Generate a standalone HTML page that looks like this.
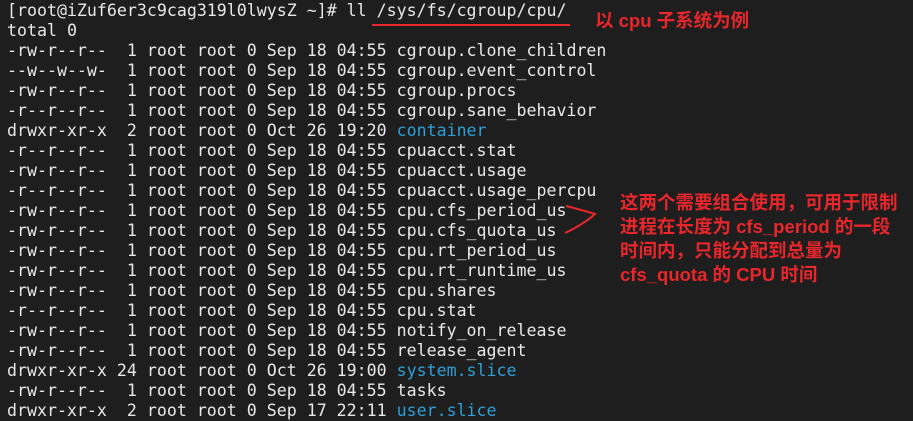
<!DOCTYPE html>
<html><head><meta charset="utf-8"><style>
html,body{margin:0;padding:0;background:#1e1e1e;width:913px;height:421px;overflow:hidden}
pre{margin:0;position:absolute;left:7px;top:1px;font-family:"DejaVu Sans Mono","Liberation Mono",monospace;font-size:16.6px;line-height:20px;color:#e8e8e8}
.b{color:#2e9fd8}
.r{position:absolute;color:#e8262b;font-family:"Liberation Sans","Noto Sans CJK SC",sans-serif;font-weight:bold;font-size:18.5px;white-space:nowrap}
</style></head><body>
<pre>[root@iZuf6er3c9cag319l0lwysZ ~]# ll /sys/fs/cgroup/cpu/
total 0
-rw-r--r--  1 root root 0 Sep 18 04:55 cgroup.clone_children
--w--w--w-  1 root root 0 Sep 18 04:55 cgroup.event_control
-rw-r--r--  1 root root 0 Sep 18 04:55 cgroup.procs
-r--r--r--  1 root root 0 Sep 18 04:55 cgroup.sane_behavior
drwxr-xr-x  2 root root 0 Oct 26 19:20 <span class="b">container</span>
-r--r--r--  1 root root 0 Sep 18 04:55 cpuacct.stat
-rw-r--r--  1 root root 0 Sep 18 04:55 cpuacct.usage
-r--r--r--  1 root root 0 Sep 18 04:55 cpuacct.usage_percpu
-rw-r--r--  1 root root 0 Sep 18 04:55 cpu.cfs_period_us
-rw-r--r--  1 root root 0 Sep 18 04:55 cpu.cfs_quota_us
-rw-r--r--  1 root root 0 Sep 18 04:55 cpu.rt_period_us
-rw-r--r--  1 root root 0 Sep 18 04:55 cpu.rt_runtime_us
-rw-r--r--  1 root root 0 Sep 18 04:55 cpu.shares
-r--r--r--  1 root root 0 Sep 18 04:55 cpu.stat
-rw-r--r--  1 root root 0 Sep 18 04:55 notify_on_release
-rw-r--r--  1 root root 0 Sep 18 04:55 release_agent
drwxr-xr-x 24 root root 0 Oct 26 19:00 <span class="b">system.slice</span>
-rw-r--r--  1 root root 0 Sep 18 04:55 tasks
drwxr-xr-x  2 root root 0 Sep 17 22:11 <span class="b">user.slice</span></pre>
<div style="position:absolute;left:372px;top:24px;width:198px;height:2px;background:#e8262b"></div>
<div class="r" style="left:595px;top:7px">以 cpu 子系统为例</div>
<svg style="position:absolute;left:560px;top:200px" width="40" height="40"><path d="M6 6 Q22 10 35 14 Q24 24 5 33" fill="none" stroke="#e8262b" stroke-width="2"/></svg>
<div class="r" style="left:620px;top:191px;line-height:24px">这两个需要组合使用，可用于限制<br>进程在长度为 cfs_period 的一段<br>时间内，只能分配到总量为<br>cfs_quota 的 CPU 时间</div>
</body></html>
